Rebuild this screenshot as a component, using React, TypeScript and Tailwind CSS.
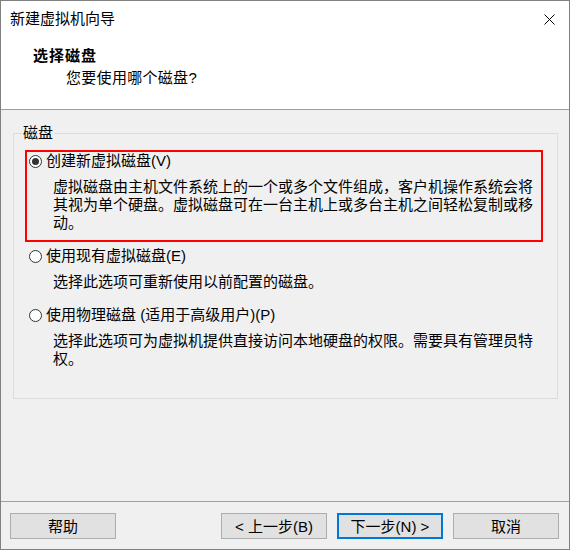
import React from 'react'

type Option = {
  label: string
  key: string
  lines: string[]
  checked?: boolean
}

const options: Option[] = [
  {
    label: '创建新虚拟磁盘',
    key: 'V',
    checked: true,
    lines: [
      '虚拟磁盘由主机文件系统上的一个或多个文件组成，客户机操作系统会将',
      '其视为单个硬盘。虚拟磁盘可在一台主机上或多台主机之间轻松复制或移',
      '动。',
    ],
  },
  {
    label: '使用现有虚拟磁盘',
    key: 'E',
    lines: ['选择此选项可重新使用以前配置的磁盘。'],
  },
  {
    label: '使用物理磁盘 (适用于高级用户)',
    key: 'P',
    lines: [
      '选择此选项可为虚拟机提供直接访问本地硬盘的权限。需要具有管理员特',
      '权。',
    ],
  },
]

function Radio({ checked }: { checked?: boolean }) {
  return (
    <span className="flex items-center justify-center w-[13px] h-[13px] rounded-full border border-[#333333] bg-white shrink-0">
      {checked && <span className="w-[7px] h-[7px] rounded-full bg-[#333333]" />}
    </span>
  )
}

function DiskOption({ option }: { option: Option }) {
  return (
    <div
      className={`w-[518px] border-2 pl-[2px] pb-[8px] ${
        option.checked ? 'border-[#ff0000]' : 'border-transparent'
      }`}
    >
      <div className="flex items-center h-[18px]">
        <Radio checked={option.checked} />
        <span className="ml-[4px] leading-[18px] whitespace-nowrap">
          {option.label}({option.key})
        </span>
      </div>
      <div className="mt-[8px] pl-[24px] leading-[18px] whitespace-nowrap">
        {option.lines.map((line) => (
          <div key={line}>{line}</div>
        ))}
      </div>
    </div>
  )
}

function WizardButton({ children, primary }: { children: React.ReactNode; primary?: boolean }) {
  return (
    <button
      className={`w-[106px] h-[26px] bg-[#e1e1e1] text-black leading-none ${
        primary ? 'border-2 border-[#0078d7]' : 'border border-[#adadad]'
      }`}
    >
      {children}
    </button>
  )
}

export default function App() {
  return (
    <div className="w-[570px] h-[550px] flex flex-col border border-[#808080] bg-[#f0f0f0] text-black text-[15px] font-['Liberation_Sans','Noto_Sans_CJK_SC',sans-serif]">
      {/* 标题区 */}
      <header className="h-[109px] shrink-0 bg-white border-b border-[#a0a0a0]">
        <div className="flex items-center justify-between h-[36px] pl-[9px] pr-[14px]">
          <span>新建虚拟机向导</span>
          <svg width="11" height="11" viewBox="0 0 11 11" className="text-black">
            <path d="M0.5 0.5L10.5 10.5M10.5 0.5L0.5 10.5" stroke="currentColor" strokeWidth="1" fill="none" />
          </svg>
        </div>
        <div className="pl-[32px] mt-[9px] leading-[20px] font-bold tracking-[1px]">选择磁盘</div>
        <div className="pl-[65px] mt-[2px] leading-[20px] tracking-[0.3px]">您要使用哪个磁盘?</div>
      </header>

      {/* 内容 */}
      <main className="flex-1 pl-[12px] pt-[14px]">
        <fieldset className="w-[545px] h-[275px] border border-[#dcdcdc]">
          <legend className="ml-[8px] px-[1px] leading-[18px]">磁盘</legend>
          <div className="pl-[11px] pt-[8px] flex flex-col gap-[3px]">
            {options.map((o) => (
              <DiskOption key={o.key} option={o} />
            ))}
          </div>
        </fieldset>
      </main>

      {/* 按钮 */}
      <footer className="h-[48px] shrink-0 border-t border-[#a0a0a0] pt-[11px] pl-[9px] pr-[10px] flex items-start justify-between">
        <WizardButton>帮助</WizardButton>
        <div className="flex gap-[10px]">
          <WizardButton>&lt; 上一步(B)</WizardButton>
          <WizardButton primary>下一步(N) &gt;</WizardButton>
          <WizardButton>取消</WizardButton>
        </div>
      </footer>
    </div>
  )
}
